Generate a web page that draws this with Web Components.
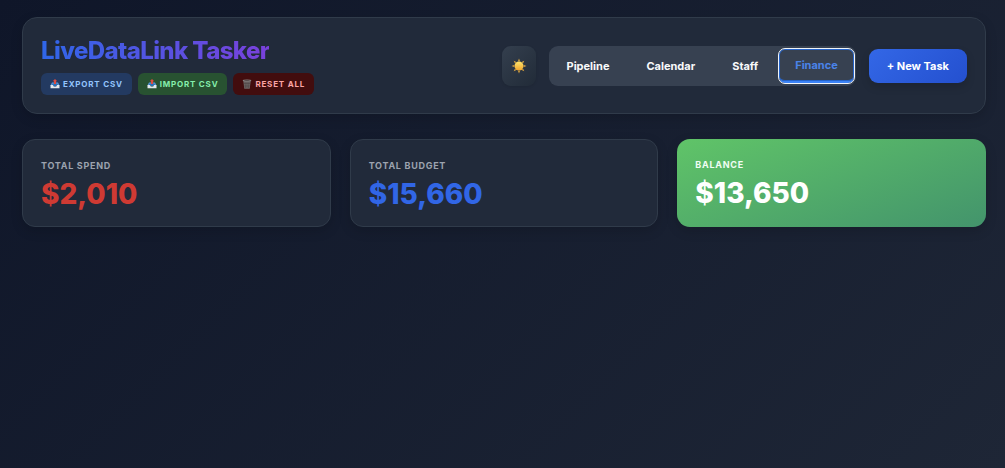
<!DOCTYPE html>
<html lang="en">
<head>
<meta charset="utf-8">
<meta name="viewport" content="width=device-width, initial-scale=1">
<title>LiveDataLink Tasker</title>
<style>
  html { min-height: 100%; background: linear-gradient(135deg, #0f1629 0%, #1e2636 100%); }
  body { margin: 0; font-family: Inter, "Liberation Sans", sans-serif; color: #f9fafb; }
</style>
</head>
<body>
<tasker-app></tasker-app>

<script>
const define = (name, html) => customElements.define(name, class extends HTMLElement {
  constructor() {
    super();
    const t = document.createElement('template');
    t.innerHTML = html;
    this.attachShadow({ mode: 'open' }).append(t.content.cloneNode(true));
  }
});

define('sun-icon', `
<style>:host{display:block;width:16px;height:16px} svg{display:block;width:100%;height:100%}</style>
<svg viewBox="0 0 32 32" aria-hidden="true">
  <defs><linearGradient id="g" x1="0" y1="0" x2="0" y2="1"><stop offset="0" stop-color="#ffe56b"/><stop offset="1" stop-color="#efa42e"/></linearGradient></defs>
  <g fill="#e0a83f">
    <path d="M16 1l2 5.500h-4z"/>
    <path d="M16 1l2 5.500h-4z" transform="rotate(45 16 16)"/>
    <path d="M16 1l2 5.500h-4z" transform="rotate(90 16 16)"/>
    <path d="M16 1l2 5.500h-4z" transform="rotate(135 16 16)"/>
    <path d="M16 1l2 5.500h-4z" transform="rotate(180 16 16)"/>
    <path d="M16 1l2 5.500h-4z" transform="rotate(225 16 16)"/>
    <path d="M16 1l2 5.500h-4z" transform="rotate(270 16 16)"/>
    <path d="M16 1l2 5.500h-4z" transform="rotate(315 16 16)"/>
  </g>
  <circle cx="16" cy="16" r="9" fill="url(#g)"/>
</svg>`);

define('tray-icon', `
<style>:host{display:block;width:10px;height:10px} svg{display:block;width:100%;height:100%}</style>
<svg viewBox="0 0 20 20" aria-hidden="true">
  <path d="M4 7h12l3 6H1z" fill="#5b9bdc"/>
  <path d="M1 12h5l1.5 3h5L14 12h5v6.500H1z" fill="#e3e8ee"/>
  <path d="M5 9h10l1 3h-2.500L12 14H8l-1.500-2H4z" fill="#2f6fb5"/>
  <path d="M10 0l4.500 4.500H12V10H8V4.500H5.500z" fill="#dc4b41"/>
</svg>`);

define('bin-icon', `
<style>:host{display:block;width:10px;height:10px} svg{display:block;width:100%;height:100%}</style>
<svg viewBox="0 0 20 20" aria-hidden="true">
  <path d="M2.500 3h15L15.500 19.500h-11z" fill="#6d6766"/>
  <path d="M6 5l1 13M10 5v13M14 5l-1 13M4 9h12M4.500 14h11" stroke="#4a4040" stroke-width="1" fill="none"/>
  <ellipse cx="10" cy="3" rx="8.500" ry="2" fill="#858080"/>
  <ellipse cx="10" cy="3" rx="6" ry="1" fill="#554b4b"/>
</svg>`);

define('chip-button', `
<style>
  :host{display:block}
  button{display:flex;align-items:center;gap:3px;height:22px;padding:0 9px;border:0;border-radius:6px;
    font:700 8px/12px Inter,"Liberation Sans",sans-serif;letter-spacing:.1em;text-transform:uppercase;
    color:#93c5fd;background:#233a61;white-space:nowrap}
  :host([tone=green]) button{color:#86efac;background:#285231}
  :host([tone=red]) button{color:#fca5a5;background:#420d0e}
</style>
<button type="button"><slot name="icon"></slot><slot></slot></button>`);

define('theme-toggle', `
<style>
  :host{display:block}
  button{display:grid;place-items:center;width:34px;height:40px;padding:0;border:0;border-radius:9px;
    background:linear-gradient(135deg,#343f4e,#212b38);box-shadow:0 1px 3px rgb(0 0 0 / .1)}
</style>
<button type="button" aria-label="Switch to light theme"><sun-icon></sun-icon></button>`);

define('nav-tab', `
<style>
  :host{display:block}
  button{box-sizing:border-box;height:34px;padding:0 16px;border:0;border-radius:6px;background:none;
    font:700 11px/16px Inter,"Liberation Sans",sans-serif;color:#f9fafb;white-space:nowrap}
  :host([active]) button{color:#4a83e8;border-bottom:2px solid #3b82f6;
    outline:1px solid #f1f5f9;box-shadow:inset 0 0 0 1px #2563c9}
</style>
<button type="button"><slot></slot></button>`);

define('nav-bar', `
<style>
  :host{display:block}
  nav{display:flex;align-items:center;gap:5px;padding:3px 2px;border-radius:9px;background:#374151}
</style>
<nav aria-label="Views"><slot></slot></nav>`);

define('primary-button', `
<style>
  :host{display:block}
  button{height:34px;padding:0 18px;border:0;border-radius:9px;color:#fff;white-space:nowrap;
    font:700 11px/16px Inter,"Liberation Sans",sans-serif;
    background:linear-gradient(135deg,#3367e6,#2450cf);box-shadow:0 4px 8px rgb(0 0 0 / .15)}
</style>
<button type="button"><slot></slot></button>`);

define('app-header', `
<style>
  :host{display:flex;flex-wrap:wrap;align-items:center;justify-content:space-between;gap:18px;
    padding:18px;border:1px solid #303b4a;border-radius:15px;background:#212a3a;
    box-shadow:0 4px 12px rgb(0 0 0 / .15)}
  h1{width:fit-content;margin:0 0 7px;font-size:24px;line-height:30px;font-weight:800;letter-spacing:-.025em;
    background:linear-gradient(90deg,#2f66e8,#7a41dc);-webkit-background-clip:text;background-clip:text;color:transparent}
  .chips{display:flex;flex-wrap:wrap;gap:6px}
  .tools{display:flex;flex-wrap:wrap;align-items:center;gap:13px}
</style>
<div class="brand">
  <h1>LiveDataLink Tasker</h1>
  <div class="chips">
    <chip-button><tray-icon slot="icon"></tray-icon>Export CSV</chip-button>
    <chip-button tone="green"><tray-icon slot="icon"></tray-icon>Import CSV</chip-button>
    <chip-button tone="red"><bin-icon slot="icon"></bin-icon>Reset All</chip-button>
  </div>
</div>
<div class="tools">
  <theme-toggle></theme-toggle>
  <nav-bar>
    <nav-tab>Pipeline</nav-tab>
    <nav-tab>Calendar</nav-tab>
    <nav-tab>Staff</nav-tab>
    <nav-tab active>Finance</nav-tab>
  </nav-bar>
  <primary-button>+ New Task</primary-button>
</div>`);

define('stat-card', `
<style>
  :host{display:block;padding:18px 18px 16px;border:1px solid #303b4a;border-radius:13px;background:#212a3a;color:#9ca3af;
    box-shadow:0 4px 12px rgb(0 0 0 / .15)}
  h2{margin:0 0 4px;font-size:9px;line-height:16px;font-weight:700;letter-spacing:.08em;text-transform:uppercase}
  p{margin:0;font-size:28px;line-height:32px;font-weight:800;color:#cf3a33}
  :host([tone=blue]) p{color:#3166e6}
  :host([tone=green]){border:0;background:linear-gradient(160deg,#60c468,#43946c);color:#f0fdf4}
  :host([tone=green]) p{color:#fff}
</style>
<h2><slot name="label"></slot></h2>
<p><slot></slot></p>`);

define('tasker-app', `
<style>
  :host{display:block;padding:17px 19px 17px 22px}
  main{display:grid;grid-template-columns:repeat(auto-fit,minmax(240px,1fr));gap:19px;margin-top:25px}
</style>
<app-header></app-header>
<main>
  <stat-card><span slot="label">Total Spend</span>$2,010</stat-card>
  <stat-card tone="blue"><span slot="label">Total Budget</span>$15,660</stat-card>
  <stat-card tone="green"><span slot="label">Balance</span>$13,650</stat-card>
</main>`);
</script>
</body>
</html>
